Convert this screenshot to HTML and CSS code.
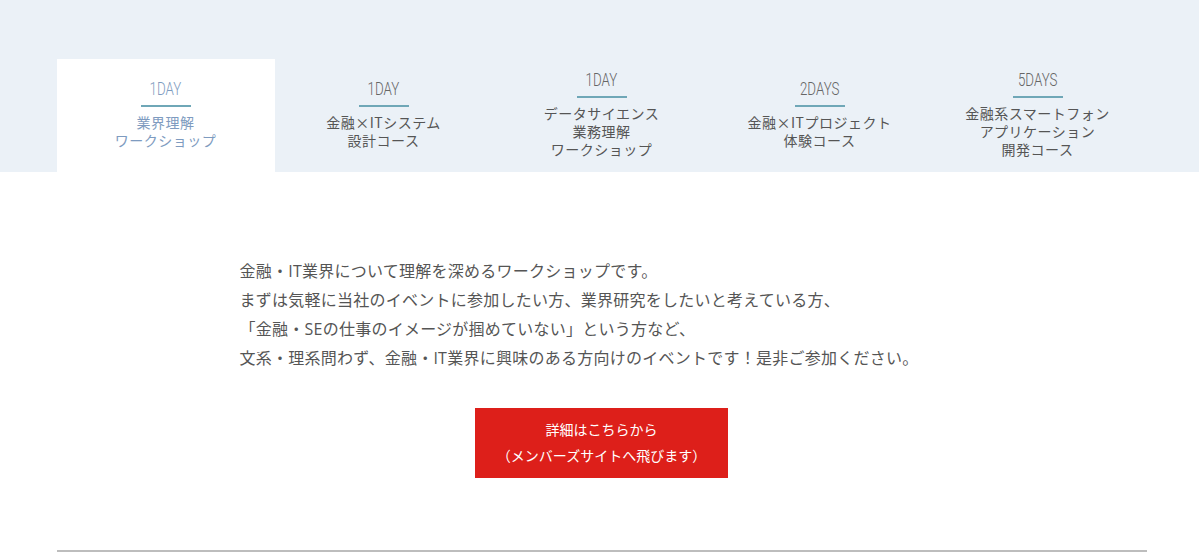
FILE: index.html
```html
<!DOCTYPE html>
<html lang="ja">
<head>
  <meta charset="UTF-8">
  <meta name="viewport" content="width=device-width, initial-scale=1.0">
  <title>ワークショップ</title>
  <link rel="stylesheet" href="styles.css">
</head>
<body>
  <div class="band">
    <ul class="tabs">
      <li class="tab active">
        <span class="days">1DAY</span>
        <span class="bar"></span>
        <p class="name">業界理解<br>ワークショップ</p>
      </li>
      <li class="tab">
        <span class="days">1DAY</span>
        <span class="bar"></span>
        <p class="name">金融×ITシステム<br>設計コース</p>
      </li>
      <li class="tab">
        <span class="days">1DAY</span>
        <span class="bar"></span>
        <p class="name">データサイエンス<br>業務理解<br>ワークショップ</p>
      </li>
      <li class="tab">
        <span class="days">2DAYS</span>
        <span class="bar"></span>
        <p class="name">金融×ITプロジェクト<br>体験コース</p>
      </li>
      <li class="tab">
        <span class="days">5DAYS</span>
        <span class="bar"></span>
        <p class="name">金融系スマートフォン<br>アプリケーション<br>開発コース</p>
      </li>
    </ul>
  </div>

  <main class="panel">
    <p class="lead">
      金融・IT業界について理解を深めるワークショップです。<br>
      まずは気軽に当社のイベントに参加したい方、業界研究をしたいと考えている方、<br>
      「金融・SEの仕事のイメージが掴めていない」という方など、<br>
      文系・理系問わず、金融・IT業界に興味のある方向けのイベントです！是非ご参加ください。
    </p>
    <a class="more" href="#">詳細はこちらから<br>（メンバーズサイトへ飛びます）</a>
  </main>

  <hr class="rule">
</body>
</html>
```

FILE: styles.css
```css
body {
  margin: 0;
  background-color: #FFFFFF;
  color: #555555;
  font-family: "Open Sans", "Noto Sans CJK JP", sans-serif;
}

.band {
  background-color: #EBF1F7;
  padding-top: 59px;
}

.tabs {
  display: flex;
  width: 1090px;
  margin: 0 0 0 calc(50% - 543px);
  padding: 0;
  list-style: none;
}

.tab {
  flex: 1;
  height: 113px;
  display: flex;
  flex-direction: column;
  align-items: center;
  justify-content: center;
  text-align: center;
  color: #555555;
}

.tab.active {
  background-color: #FFFFFF;
  color: #7E9BC0;
}

.days {
  display: inline-block;
  margin-top: -3px;
  font-family: Roboto, "DejaVu Sans", sans-serif;
  font-size: 18px;
  font-weight: 300;
  line-height: 20px;
  transform: scaleX(0.74);
  color: #666666;
}

.tab.active .days {
  color: #7E9BC0;
}

.bar {
  display: block;
  width: 50px;
  height: 1.5px;
  margin: 6px 0 6px;
  background-color: #6FA7B7;
}

.name {
  margin: 0;
  font-family: "Noto Sans CJK JP", sans-serif;
  font-size: 14px;
  line-height: 18px;
  letter-spacing: 0.5px;
}

.panel {
  width: 720px;
  margin: 0 auto;
  padding-top: 85px;
  display: flex;
  flex-direction: column;
  align-items: center;
}

.lead {
  align-self: stretch;
  margin: 0;
  font-size: 16px;
  line-height: 29px;
  letter-spacing: 0.25px;
  color: #555555;
}

.more {
  display: block;
  width: 253px;
  margin: 35px 0 0 4px;
  padding: 9px 0;
  background-color: #DD1F1A;
  color: #FFFFFF;
  text-align: center;
  text-decoration: none;
  font-size: 14px;
  line-height: 26px;
}

.rule {
  width: 1090px;
  margin: 72px 0 0 calc(50% - 543px);
  border: none;
  border-top: 2px solid #BDBDBD;
}
```
